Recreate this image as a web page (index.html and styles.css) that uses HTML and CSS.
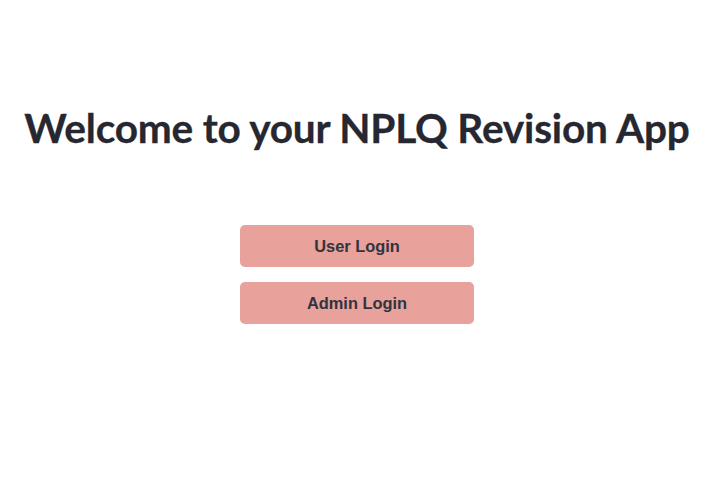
FILE: index.html
```html
<!DOCTYPE html>
<html>
<head>
<meta charset="utf-8">
<link rel="stylesheet" href="styles.css">
</head>
<body>
<main class="page">
  <h1 class="title">Welcome to your NPLQ Revision App</h1>
  <div class="actions">
    <button class="btn">User Login</button>
    <button class="btn">Admin Login</button>
  </div>
</main>
</body>
</html>
```
FILE: styles.css
```css
html, body {
  margin: 0;
  padding: 0;
  background: #ffffff;
}
.page {
  width: 714px;
  height: 480px;
  display: flex;
  flex-direction: column;
  align-items: center;
}
.title {
  margin: 104px 0 0 0;
  font-family: Lato, "Open Sans", sans-serif;
  font-weight: 700;
  font-size: 40.6px;
  line-height: 48px;
  color: #262730;
  white-space: nowrap;
  letter-spacing: -0.2px;
  -webkit-text-stroke: 0.3px #262730;
}
.actions {
  margin-top: 73px;
  display: flex;
  flex-direction: column;
  gap: 15px;
}
.btn {
  width: 234px;
  height: 42px;
  border: none;
  border-radius: 5px;
  background: #e8a19b;
  color: #31333f;
  font-family: "Liberation Sans", Arial, sans-serif;
  font-weight: 700;
  font-size: 16.4px;
  padding: 0;
  cursor: pointer;
}
```
